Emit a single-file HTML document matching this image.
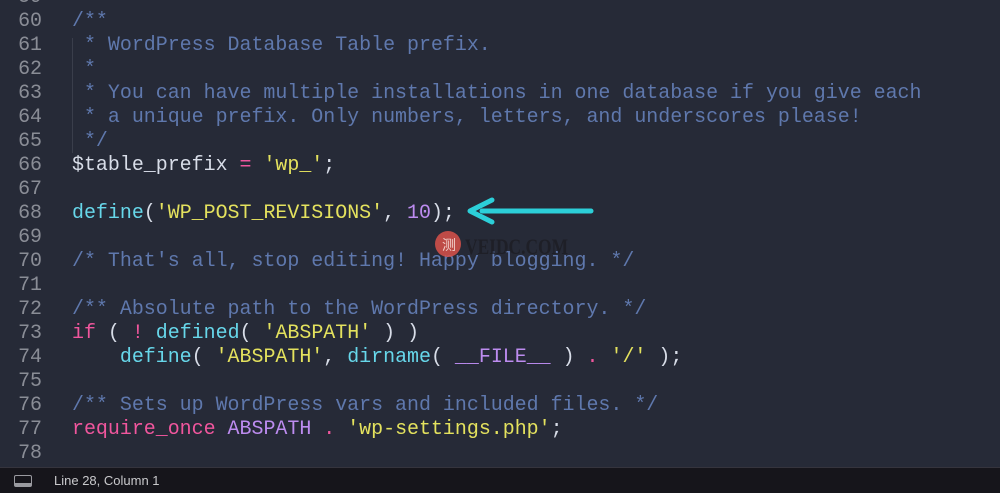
<!DOCTYPE html>
<html><head><meta charset="utf-8"><style>
html,body{margin:0;padding:0;width:1000px;height:493px;overflow:hidden;background:#262a37;}
.code{position:absolute;left:0;top:-15px;width:1000px;font-family:"Liberation Mono",monospace;font-size:19.95px;line-height:24px;color:#d8dde8;white-space:pre;}
.ln{display:inline-block;width:42px;text-align:right;color:#8a8d96;margin-right:30px;}
.c{color:#5f78ad}.p{color:#f0569d}.y{color:#e4e25e}.f{color:#67d7ea}.u{color:#bd8cf0}
.status{position:absolute;left:0;top:467px;width:1000px;height:26px;background:#16151b;border-top:1px solid #35343d;box-sizing:border-box;font-family:"Liberation Sans",sans-serif;font-size:13px;color:#c9c9cc;}
.icon{position:absolute;left:14px;top:7px;width:18px;height:12px;border:1.5px solid #9a9aa0;border-radius:2px;box-sizing:border-box;}
.icon:after{content:"";position:absolute;left:0;right:0;bottom:0;height:3px;background:#9a9aa0;}
.guide{position:absolute;left:72px;top:38px;width:1px;height:115px;background:#3a3e4b;}
</style></head><body>
<div class="guide"></div>
<div class="code"><span class="ln">59</span>
<span class="ln">60</span><span class="c">/**</span>
<span class="ln">61</span><span class="c"> * WordPress Database Table prefix.</span>
<span class="ln">62</span><span class="c"> *</span>
<span class="ln">63</span><span class="c"> * You can have multiple installations in one database if you give each</span>
<span class="ln">64</span><span class="c"> * a unique prefix. Only numbers, letters, and underscores please!</span>
<span class="ln">65</span><span class="c"> */</span>
<span class="ln">66</span>$table_prefix <span class="p">=</span> <span class="y">'wp_'</span>;
<span class="ln">67</span>
<span class="ln">68</span><span class="f">define</span>(<span class="y">'WP_POST_REVISIONS'</span>, <span class="u">10</span>);
<span class="ln">69</span>
<span class="ln">70</span><span class="c">/* That's all, stop editing! Happy blogging. */</span>
<span class="ln">71</span>
<span class="ln">72</span><span class="c">/** Absolute path to the WordPress directory. */</span>
<span class="ln">73</span><span class="p">if</span> ( <span class="p">!</span> <span class="f">defined</span>( <span class="y">'ABSPATH'</span> ) )
<span class="ln">74</span>    <span class="f">define</span>( <span class="y">'ABSPATH'</span>, <span class="f">dirname</span>( <span class="u">__FILE__</span> ) <span class="p">.</span> <span class="y">'/'</span> );
<span class="ln">75</span>
<span class="ln">76</span><span class="c">/** Sets up WordPress vars and included files. */</span>
<span class="ln">77</span><span class="p">require_once</span> <span class="u">ABSPATH</span> <span class="p">.</span> <span class="y">'wp-settings.php'</span>;
<span class="ln">78</span>
</div>
<svg style="position:absolute;left:0;top:0" width="1000" height="493">
<line x1="482" y1="211" x2="591" y2="211" stroke="#2ccfd8" stroke-width="5" stroke-linecap="round"/>
<polyline points="492,200 470,211 492,222" fill="none" stroke="#2ccfd8" stroke-width="5" stroke-linecap="round" stroke-linejoin="round"/>
<circle cx="448" cy="244" r="13" fill="#d9514a" opacity="0.85"/>
<text x="442" y="250" font-family="Noto Sans CJK SC,sans-serif" font-size="14" fill="#f2d0cc">测</text>
<text x="465" y="254" font-family="Liberation Serif,serif" font-size="22" font-weight="bold" fill="#1c1c22" opacity="0.75" textLength="103" lengthAdjust="spacingAndGlyphs">VEIDC.COM</text>
</svg>
<div class="status"><div class="icon"></div><span style="position:absolute;left:54px;top:5px;">Line 28, Column 1</span></div>
</body></html>
